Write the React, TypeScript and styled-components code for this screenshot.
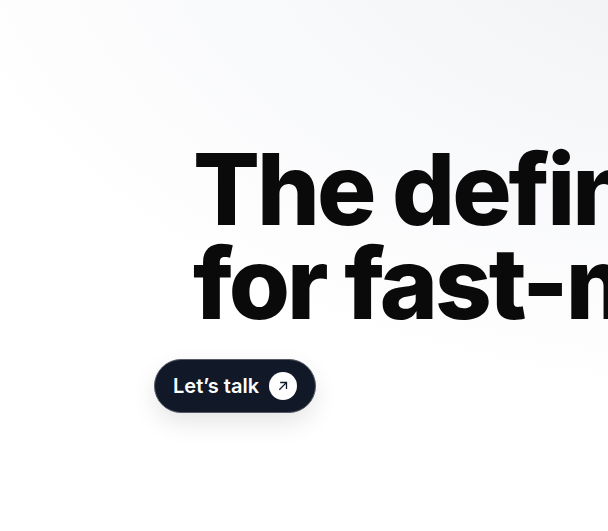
import React from "react";
import styled, { createGlobalStyle } from "styled-components";

const GlobalStyle = createGlobalStyle`
  *, *::before, *::after { box-sizing: border-box; }
  body {
    margin: 0;
    background: #fff;
    font-family: Inter, sans-serif;
  }
`;

const Hero = styled.main`
  min-height: 100vh;
  padding: 142px 0 0 154px;
  overflow: hidden;
  background: radial-gradient(ellipse 140% 99% at 125% -23%, #f2f3f5 25%, #f8f9fb 60%, #fcfcfd 83%, #fff 100%);
`;

const Headline = styled.h1`
  margin: 0 0 29px 39px;
  color: #0a0a0a;
  font-size: 99px;
  font-weight: 800;
  line-height: 94px;
  letter-spacing: -3px;
  white-space: nowrap;
`;

const TalkButton = styled.button`
  display: flex;
  align-items: center;
  gap: 10px;
  height: 54px;
  padding: 0 18px;
  border: 1px solid #555a66;
  border-radius: 27px;
  background: #111827;
  color: #fff;
  font-family: inherit;
  font-size: 20px;
  font-weight: 600;
  box-shadow: 0 10px 24px rgba(0, 0, 0, 0.1);
  cursor: pointer;
`;

const IconBadge = styled.span`
  display: grid;
  place-items: center;
  width: 28px;
  height: 28px;
  border-radius: 50%;
  background: #fff;
  color: #111827;
`;

export default function App() {
  return (
    <>
      <GlobalStyle />
      <Hero>
        <Headline>
          The defin
          <br />
          for fast-m
        </Headline>
        <TalkButton type="button">
          Let’s talk
          <IconBadge>
            <svg width="14" height="14" viewBox="0 0 14 14" fill="none" stroke="currentColor" strokeWidth="1.3" aria-hidden="true">
              <path d="M3.3 10.7 10.4 3.6M4.2 3.5h6.3v6.5" />
            </svg>
          </IconBadge>
        </TalkButton>
      </Hero>
    </>
  );
}
